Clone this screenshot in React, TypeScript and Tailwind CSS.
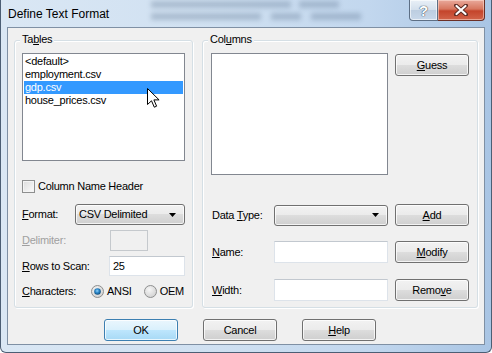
import React from "react";

const btnFace =
  "border-[#707070] bg-[linear-gradient(to_bottom,#f2f2f2_0%,#ebebeb_50%,#dddddd_50%,#cfcfcf_100%)]";
const defFace =
  "border-[#3c7fb1] bg-[linear-gradient(to_bottom,#eaf6fd_0%,#d9f0fc_50%,#bee6fd_50%,#a7d9f5_100%)]";

const Button = ({
  children,
  isDefault,
  className = "",
}: {
  children: React.ReactNode;
  isDefault?: boolean;
  className?: string;
}) => (
  <div
    className={`flex h-[22px] w-[74px] shrink-0 items-center justify-center rounded-[3px] border shadow-[inset_0_0_0_1px_rgba(255,255,255,0.75)] ${
      isDefault ? defFace : btnFace
    } ${className}`}
  >
    {children}
  </div>
);

const Arrow = () => (
  <svg width="7" height="4" viewBox="0 0 7 4">
    <path d="M0 0h7L3.5 4z" fill="#000" />
  </svg>
);

const Combo = ({ value, className = "" }: { value?: string; className?: string }) => (
  <div
    className={`flex h-[21px] shrink-0 items-center justify-between rounded-[3px] border pl-[3px] pr-[8px] shadow-[inset_0_0_0_1px_rgba(255,255,255,0.75)] ${btnFace} ${className}`}
  >
    <span>{value}</span>
    <Arrow />
  </div>
);

const TextBox = ({ value, className = "" }: { value?: string; className?: string }) => (
  <div
    className={`flex shrink-0 items-center border border-[#dde3ea] border-t-[#c2c8cf] bg-white pl-[3px] ${className}`}
  >
    {value}
  </div>
);

const Group = ({
  label,
  className = "",
  children,
}: {
  label: React.ReactNode;
  className?: string;
  children: React.ReactNode;
}) => (
  <div
    className={`relative flex h-[268px] flex-col rounded-[3px] border border-[#d5dfe5] shadow-[inset_1px_1px_0_#fff,1px_1px_0_#fff] ${className}`}
  >
    <span className="absolute left-[5px] top-[-8px] bg-[#f0f0f0] px-[2px] leading-[13px]">
      {label}
    </span>
    {children}
  </div>
);

const Radio = ({ checked }: { checked?: boolean }) => (
  <svg width="13" height="13" viewBox="0 0 13 13" className="shrink-0">
    <defs>
      <radialGradient id="rOff" cx="0.4" cy="0.35" r="0.7">
        <stop offset="0" stopColor="#f6f6f6" />
        <stop offset="1" stopColor="#d0d0d0" />
      </radialGradient>
      <radialGradient id="rOn" cx="0.45" cy="0.4" r="0.6">
        <stop offset="0" stopColor="#8fd3fb" />
        <stop offset="0.5" stopColor="#2b86c8" />
        <stop offset="1" stopColor="#0e4a78" />
      </radialGradient>
    </defs>
    <circle cx="6.5" cy="6.5" r="6" fill="url(#rOff)" stroke="#8e8f8f" />
    {checked && <circle cx="6.5" cy="6.5" r="3.3" fill="url(#rOn)" />}
  </svg>
);

const tables = ["<default>", "employment.csv", "gdp.csv", "house_prices.csv"];

export default function App() {
  return (
    <div className="relative flex h-[353px] w-[492px] flex-col overflow-hidden rounded-b-[6px] border-x border-b border-[#4c5e74] bg-[linear-gradient(to_right,#dae7f4_0%,#cfe0f1_45%,#c2d7ee_75%,#a9c5e4_100%)] font-['Liberation_Sans',Arial,sans-serif] text-[11px] tracking-[-0.25px] text-black">
      {/* glass: blurred shapes of the window behind */}
      <div className="pointer-events-none absolute left-[150px] top-[1px] flex flex-col gap-[5px] opacity-30 blur-[2.5px]">
        <div className="flex gap-[8px]">
          <div className="h-[7px] w-[140px] bg-[#4f6683]" />
          <div className="h-[7px] w-[40px] bg-[#4f6683]" />
        </div>
        <div className="flex gap-[10px]">
          <div className="h-[7px] w-[110px] bg-[#4f6683]" />
          <div className="h-[7px] w-[30px] bg-[#4f6683]" />
          <div className="h-[7px] w-[50px] bg-[#4f6683]" />
        </div>
      </div>

      {/* title bar */}
      <div className="relative flex h-[27px] shrink-0 items-start">
        <span className="pl-[7px] pt-[7px] text-[12px] leading-[15px] tracking-normal">
          Define Text Format
        </span>
        <div className="ml-auto mr-[6px] flex h-[21px]">
          <div className="flex w-[29px] items-center justify-center rounded-bl-[4px] border border-t-0 border-[#5d6f85] bg-[linear-gradient(to_bottom,#e9f0f7_0%,#d3dfec_50%,#bccde0_50%,#c8d8ea_100%)] shadow-[inset_0_0_0_1px_rgba(255,255,255,0.6)]">
            <span className="text-[15px] font-bold leading-none text-white [text-shadow:0_0_1px_#2e3b4a,0_0_1px_#2e3b4a]">
              ?
            </span>
          </div>
          <div className="flex w-[47px] items-center justify-center rounded-br-[4px] border border-l-0 border-t-0 border-[#6b2f26] bg-[linear-gradient(to_bottom,#e9a99b_0%,#d7775f_45%,#c4442b_55%,#d2644a_100%)] shadow-[inset_0_0_0_1px_rgba(255,230,220,0.5)]">
            <svg width="14" height="12" viewBox="0 0 14 12">
              <path d="M2 1.5L12 10.5M12 1.5L2 10.5" stroke="#5b2a22" strokeWidth="4" strokeLinecap="round" />
              <path d="M2.5 2L11.5 10M11.5 2L2.5 10" stroke="#fff" strokeWidth="2.2" strokeLinecap="round" />
            </svg>
          </div>
        </div>
      </div>

      {/* client area */}
      <div className="mx-[6px] flex h-[318px] shrink-0 flex-col border border-[#7f90a4] bg-[#f0f0f0] px-[6px] pt-[12px]">
        <div className="flex h-[268px] gap-[9px]">
          <Group
            className="w-[179px] pl-[7px]"
            label={
              <>
                Ta<u>b</u>les
              </>
            }
          >
            <div className="mt-[12px] h-[108px] w-[163px] border border-[#828790] bg-white p-[1px]">
              {tables.map((t) => (
                <div
                  key={t}
                  className={`h-[13px] pl-[1px] leading-[13px] ${
                    t === "gdp.csv" ? "bg-[#3399ff] text-white" : ""
                  }`}
                >
                  {t}
                </div>
              ))}
            </div>
            <div className="mt-[19px] flex h-[13px] items-center gap-[3px]">
              <div className="h-[13px] w-[13px] border border-[#8e8f8f] bg-[linear-gradient(135deg,#dcdcdc,#fbfbfb)] shadow-[inset_0_0_0_1px_#f4f4f4]" />
              <span>Column Name Header</span>
            </div>
            <div className="mt-[11px] flex h-[21px] items-center">
              <span className="w-[53px]">
                <u>F</u>ormat:
              </span>
              <Combo value="CSV Delimited" className="w-[110px]" />
            </div>
            <div className="mt-[5px] flex h-[21px] items-center">
              <span className="w-[88px] text-[#a0a0a0]">
                <u>D</u>elimiter:
              </span>
              <div className="h-[21px] w-[38px] border border-[#c5c9cd]" />
            </div>
            <div className="mt-[5px] flex h-[20px] items-center">
              <span className="w-[87px]">
                <u>R</u>ows to Scan:
              </span>
              <TextBox value="25" className="h-[20px] w-[76px]" />
            </div>
            <div className="mt-[9px] flex h-[13px] items-center">
              <span className="w-[69px]">
                <u>C</u>haracters:
              </span>
              <Radio checked />
              <span className="ml-[3px]">ANSI</span>
              <span className="ml-[12px]">
                <Radio />
              </span>
              <span className="ml-[3px]">OEM</span>
            </div>
          </Group>

          <Group
            className="w-[276px]"
            label={
              <>
                Col<u>u</u>mns
              </>
            }
          >
            <div className="flex items-start">
              <div className="ml-[8px] mt-[12px] h-[122px] w-[177px] border border-[#828790] bg-white" />
              <Button className="ml-[7px] mt-[13px]">
                <span>
                  <u>G</u>uess
                </span>
              </Button>
            </div>
            <div className="mt-[29px] flex h-[22px] items-center pl-[9px]">
              <span className="w-[62px]">
                Data <u>T</u>ype:
              </span>
              <Combo className="w-[114px]" />
              <Button className="ml-[7px]">
                <span>
                  <u>A</u>dd
                </span>
              </Button>
            </div>
            <div className="mt-[15px] flex h-[22px] items-center pl-[9px]">
              <span className="w-[62px]">
                <u>N</u>ame:
              </span>
              <TextBox className="h-[22px] w-[114px]" />
              <Button className="ml-[7px]">
                <span>
                  <u>M</u>odify
                </span>
              </Button>
            </div>
            <div className="mt-[16px] flex h-[22px] items-center pl-[9px]">
              <span className="w-[62px]">
                <u>W</u>idth:
              </span>
              <TextBox className="h-[22px] w-[114px]" />
              <Button className="ml-[7px]">
                <span>
                  Remo<u>v</u>e
                </span>
              </Button>
            </div>
          </Group>
        </div>

        <div className="ml-[90px] mt-[11px] flex gap-[25px]">
          <Button isDefault>OK</Button>
          <Button>Cancel</Button>
          <Button>
            <span>
              <u>H</u>elp
            </span>
          </Button>
        </div>
      </div>

      {/* mouse pointer */}
      <svg
        className="pointer-events-none absolute left-[146px] top-[88px]"
        width="13"
        height="20"
        viewBox="0 0 13 20"
      >
        <path
          d="M0.5 0.5V16.5L4.5 12.8L7.3 19.2L9.6 18.2L6.9 11.9H12.1Z"
          fill="#fff"
          stroke="#000"
          strokeLinejoin="round"
        />
      </svg>
    </div>
  );
}
